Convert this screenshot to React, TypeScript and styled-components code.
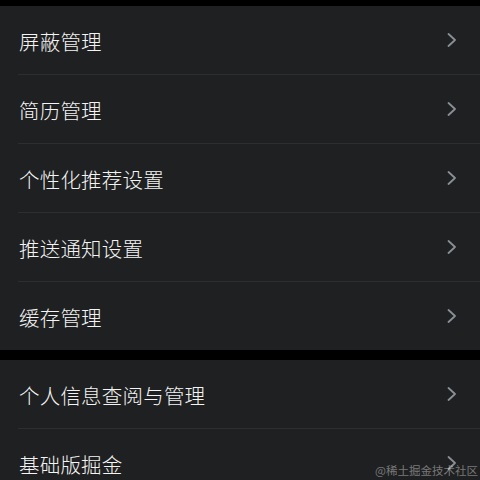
import React from "react";
import styled, { createGlobalStyle } from "styled-components";

const GlobalStyle = createGlobalStyle`
  html, body {
    margin: 0;
    padding: 0;
    background: #000000;
  }
  body {
    font-family: "Noto Sans CJK SC", "Noto Sans", sans-serif;
  }
`;

const Page = styled.div`
  width: 480px;
  height: 480px;
  overflow: hidden;
  position: relative;
  background: #000000;
  padding-top: 6px;
  box-sizing: border-box;
  display: flex;
  flex-direction: column;
  gap: 10px;
`;

const Group = styled.div`
  background: #1f2021;
  display: flex;
  flex-direction: column;
  flex-shrink: 0;
`;

const Row = styled.div<{ last?: boolean }>`
  height: 68px;
  display: flex;
  align-items: center;
  justify-content: space-between;
  padding: 0 23px 0 19px;
  position: relative;
  &::after {
    content: "";
    display: ${(p) => (p.last ? "none" : "block")};
    position: absolute;
    left: 18px;
    right: 0;
    bottom: -1px;
    height: 1px;
    background: #2d2e30;
  }
  & + & {
    margin-top: 1px;
  }
`;

const Label = styled.span`
  color: #f4f4f4;
  font-size: 20.5px;
  font-weight: 300;
  line-height: 1;
  letter-spacing: 0.2px;
  transform: translateY(1px);
`;

const Watermark = styled.div`
  position: absolute;
  right: 2px;
  bottom: 4px;
  color: rgba(210, 210, 210, 0.5);
  font-size: 11.5px;
  line-height: 1;
  font-family: "Noto Sans CJK SC", sans-serif;
`;

const Chevron = () => (
  <svg width="10" height="14" viewBox="0 0 10 14">
    <polyline
      points="1.5,1 8,7 1.5,13"
      fill="none"
      stroke="#8a8e96"
      strokeWidth="1.8"
      strokeLinecap="round"
      strokeLinejoin="round"
    />
  </svg>
);

const groups = [
  ["屏蔽管理", "简历管理", "个性化推荐设置", "推送通知设置", "缓存管理"],
  ["个人信息查阅与管理", "基础版掘金"],
];

export default function App() {
  return (
    <>
      <GlobalStyle />
      <Page>
        {groups.map((items, gi) => (
          <Group key={gi}>
            {items.map((item, i) => (
              <Row key={item} last={i === items.length - 1}>
                <Label>{item}</Label>
                <Chevron />
              </Row>
            ))}
          </Group>
        ))}
        <Watermark>@稀土掘金技术社区</Watermark>
      </Page>
    </>
  );
}
